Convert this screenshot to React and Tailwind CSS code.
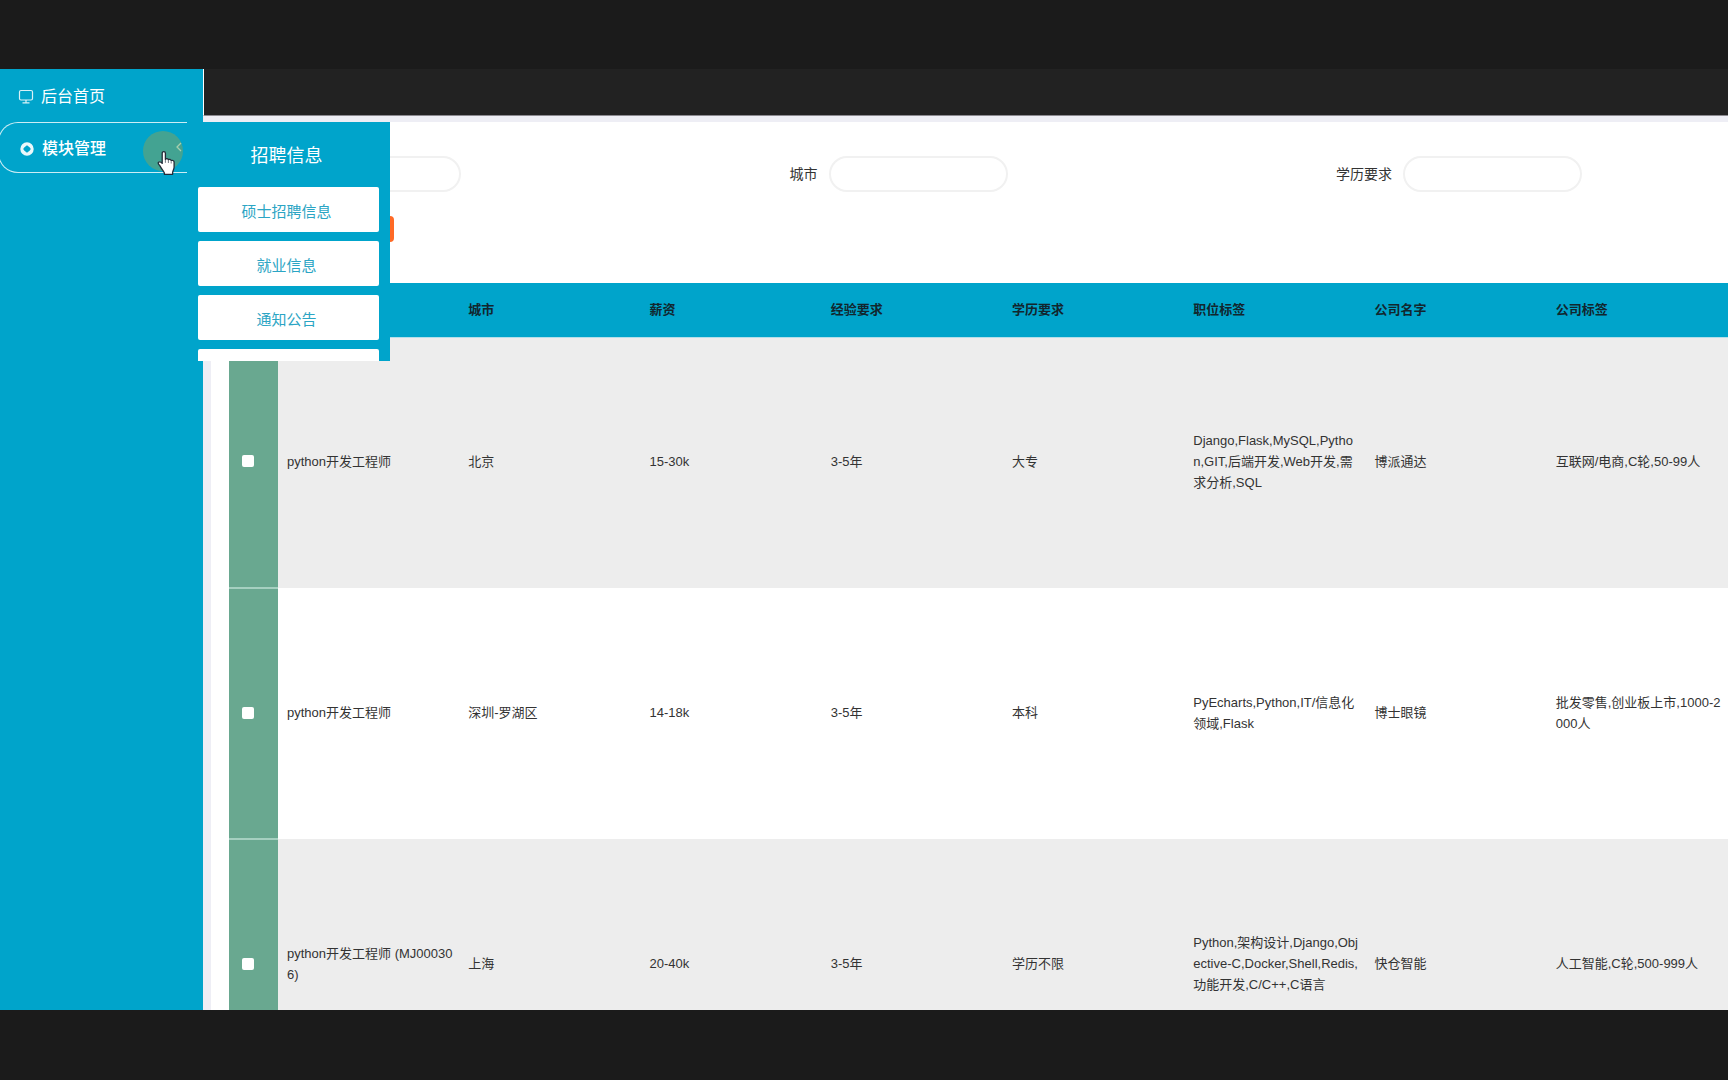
import React, { useState } from 'react';

const columns = ['城市', '薪资', '经验要求', '学历要求', '职位标签', '公司名字', '公司标签'];

const jobs = [
    {
        id: 1,
        cells: ['python开发工程师', '北京', '15-30k', '3-5年', '大专', 'Django,Flask,MySQL,Python,GIT,后端开发,Web开发,需求分析,SQL', '博派通达', '互联网/电商,C轮,50-99人']
    },
    {
        id: 2,
        cells: ['python开发工程师', '深圳-罗湖区', '14-18k', '3-5年', '本科', 'PyEcharts,Python,IT/信息化领域,Flask', '博士眼镜', '批发零售,创业板上市,1000-2000人']
    },
    {
        id: 3,
        cells: ['python开发工程师 (MJ000306)', '上海', '20-40k', '3-5年', '学历不限', 'Python,架构设计,Django,Objective-C,Docker,Shell,Redis,功能开发,C/C++,C语言', '快仓智能', '人工智能,C轮,500-999人']
    }
];

const subMenu = ['硕士招聘信息', '就业信息', '通知公告'];

const filters = [
    { id: 'job', label: '职位' },
    { id: 'city', label: '城市' },
    { id: 'degree', label: '学历要求' }
];

const MonitorIcon = () => (
    <svg className="size-4" viewBox="0 0 16 16" fill="none" stroke="currentColor" strokeOpacity="0.85">
        <rect x="1.500" y="1.500" width="13" height="9.500" rx="1.5" strokeWidth="1.2" />
        <path d="M8 11v2.500M4.500 13.800h7" strokeWidth="1.2" />
    </svg>
);

const ModuleIcon = () => (
    <svg className="size-4" viewBox="0 0 16 16" fill="currentColor" fillOpacity="0.92">
        <path fillRule="evenodd" d="M8 1.300a6.700 6.700 0 1 1 0 13.400A6.700 6.700 0 0 1 8 1.300zM8 4.200L6.400 5.400 5.200 6.600 4.200 8l1 1.400 1.200 1.200L8 11.800l1.600-1.200 1.200-1.200 1-1.400-1-1.400-1.200-1.200z" />
    </svg>
);

// Round highlight with the hand pointer on top of it
const Pointer = () => (
    <div className="pointer-events-none absolute top-[9px] left-[143px] size-10 rounded-full bg-[#43a392]">
        <svg className="absolute top-1/2 left-[14px] h-[25px] w-[19px]" viewBox="0 0 19 25">
            <path
                d="M5.2 2.2c0-2 3.2-2 3.2 0v6.2c.6-1.2 2.8-1 3 .5.7-1 2.6-.6 2.8.8.9-.8 2.9-.2 2.9 1.4v5.2c0 2-1.3 3.2-1.5 5.4v1.6H7.4v-1.4C6.600 20 4.600 17.800 3.400 15.600 2.600 14.200 1.200 13.200 1.200 12c0-1.500 2.300-1.700 4 .4z"
                fill="#fff"
                stroke="#222b38"
                strokeWidth="1.3"
                strokeLinejoin="round"
            />
            <path d="M8.400 9v2.800M11.400 9.500v2.500M14.200 10.500v2" stroke="#222b38" strokeOpacity="0.7" strokeWidth="0.9" />
        </svg>
    </div>
);

const Sidebar = () => (
    <nav className="relative z-10 w-[203px] shrink-0 bg-[#00a4cb] text-white">
        <a href="#home" className="flex h-[53px] items-center gap-[7px] pt-[3px] pl-[18px] text-[16px]">
            <MonitorIcon />
            后台首页
        </a>
        <div className="relative">
            <button className="-ml-[2px] flex h-[51px] w-[189px] items-center gap-[7px] rounded-l-[20px] border-y border-l border-white/80 pt-[2px] pl-[20px] text-[16px] font-medium">
                <ModuleIcon />
                模块管理
            </button>
            <Pointer />
            <svg className="absolute top-[20px] left-[176px] h-[10px] w-[6px]" viewBox="0 0 6 10" fill="none" stroke="#a8cfae" strokeWidth="1.3">
                <path d="M5 1L1 5l4 4" />
            </svg>

            {/* Fly-out menu */}
            <div className="absolute top-0 left-[198px] h-[239px] w-[192px] overflow-hidden bg-[#00a4cb] pr-[11px]">
                <h2 className="flex h-[65px] items-center justify-center pt-1 pr-1 text-[18px]">招聘信息</h2>
                <ul className="flex flex-col gap-[9px]">
                    {subMenu.map((item) => (
                        <li key={item}>
                            <a href={`#${item}`} className="flex h-[45px] items-center justify-center rounded-xs bg-white pt-[6px] pr-1 text-[15px] text-[#2ba5c4]">
                                {item}
                            </a>
                        </li>
                    ))}
                    <li>
                        <a href="#more" aria-label="更多" className="block h-[45px] rounded-xs bg-white" />
                    </li>
                </ul>
            </div>
        </div>
    </nav>
);

const SearchForm = () => (
    <form className="h-[161px] pt-[34px] pr-[146px] pl-8">
        <div className="flex justify-between">
            {filters.map(({ id, label }) => (
                <div key={id} className="flex items-center gap-[11px] text-[14px]">
                    <label htmlFor={id}>{label}</label>
                    <input id={id} type="text" className="h-9 w-[179px] rounded-full border-2 border-[#f1f1f1] bg-white px-4 outline-none" />
                </div>
            ))}
        </div>
        <button type="button" className="mt-6 ml-[72px] h-[26px] w-[79px] rounded bg-[#ff6a26] text-[14px] text-white">
            查询
        </button>
    </form>
);

const JobTable = () => {
    const [selected, setSelected] = useState([]);
    const toggle = (id) => setSelected((prev) => (prev.includes(id) ? prev.filter((item) => item !== id) : [...prev, id]));

    return (
        <div className="pl-[18px]">
            <table className="w-full table-fixed text-left text-[13px] leading-[21px]">
                <thead>
                    <tr className="h-[54px] border-b border-[#b5dfea] bg-[#00a4cb] text-[#12262e]">
                        <th className="w-[49px]" />
                        <th aria-label="职位" />
                        {columns.map((column) => (
                            <th key={column} className="pr-[6px] pl-[9px] font-bold">
                                {column}
                            </th>
                        ))}
                    </tr>
                </thead>
                <tbody>
                    {jobs.map(({ id, cells }) => (
                        <tr key={id} className="h-[251px] odd:bg-[#ededed] even:bg-white">
                            <td className="border-b-2 border-[#a5d0c0] bg-[#69a890] pb-[2px] pl-[13px]">
                                <input
                                    type="checkbox"
                                    aria-label={cells[0]}
                                    checked={selected.includes(id)}
                                    onChange={() => toggle(id)}
                                    className="block size-3 appearance-none rounded-xs bg-white checked:bg-blue-600"
                                />
                            </td>
                            {cells.map((cell, idx) => (
                                <td key={idx} className="pr-[6px] pb-[2px] pl-[9px] break-all">
                                    {cell}
                                </td>
                            ))}
                        </tr>
                    ))}
                </tbody>
            </table>
        </div>
    );
};

export default function App() {
    return (
        <div className="h-screen overflow-hidden bg-[#1b1b1b] pt-[69px] pb-[70px] font-['Liberation_Sans','Noto_Sans_CJK_SC',sans-serif] text-[#333]">
            <div className="flex h-full overflow-hidden">
                <Sidebar />
                <main className="min-w-0 flex-1 bg-[#eeeef5]">
                    <div className="h-[47px] border-b border-l border-b-[#8c8a90] border-l-white bg-[#222]" />
                    <div className="mt-[6px] ml-[8px] bg-white">
                        <SearchForm />
                        <JobTable />
                    </div>
                </main>
            </div>
        </div>
    );
}
